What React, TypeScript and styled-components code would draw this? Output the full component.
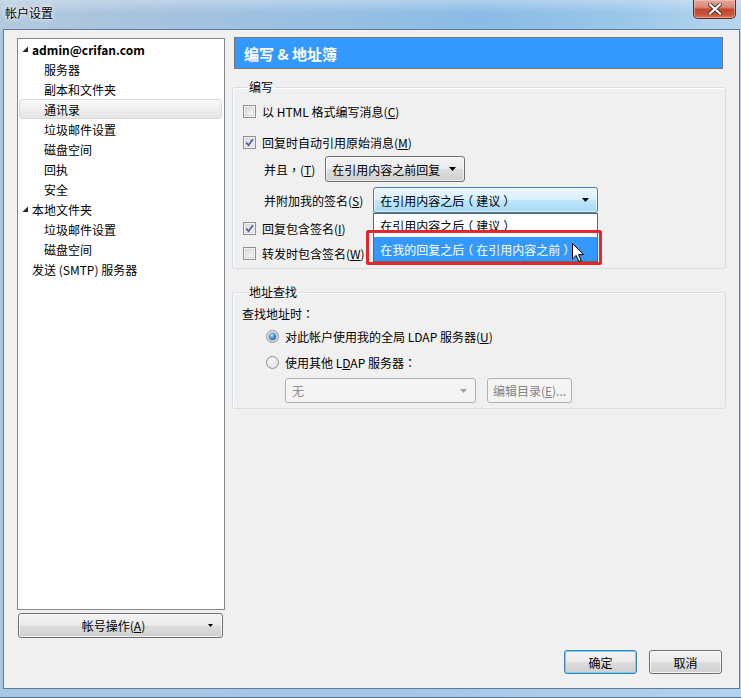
import React from "react";
import styled, { createGlobalStyle } from "styled-components";

const GlobalStyle = createGlobalStyle`
  html, body { margin: 0; padding: 0; }
  body {
    width: 741px; height: 698px; overflow: hidden;
    font-family: "Noto Sans CJK SC", "Noto Sans", sans-serif;
    font-size: 12px; color: #000;
  }
  * { box-sizing: border-box; }
`;

const Window = styled.div`
  width: 741px;
  height: 698px;
  display: flex;
  flex-direction: column;
  background: linear-gradient(90deg, #aac8e4 0%, #a3c6e6 50%, #b2d3ee 100%);
  border-bottom: 1px solid #5a7390;
`;

const TitleBar = styled.div`
  height: 29px;
  flex: none;
  display: flex;
  align-items: flex-start;
  justify-content: space-between;
  padding-left: 5px;
  background:
    linear-gradient(to bottom, rgba(255,255,255,0.3), rgba(255,255,255,0) 45%),
    linear-gradient(90deg, #b4c9de 0%, #a5c2de 22%, #98c0e3 45%, #8abbe5 65%, #9bc7e9 85%, #b8d6ed 100%);
`;

const Title = styled.div`
  line-height: 26px;
  font-size: 12px;
  color: #000;
  text-shadow: 0 0 6px #fff, 0 0 3px #fff;
`;

const CloseButton = styled.div`
  width: 43px;
  height: 19px;
  margin-right: 5px;
  display: flex;
  align-items: center;
  justify-content: center;
  border: 1px solid #5e2a22;
  border-top: none;
  border-radius: 0 0 5px 5px;
  background: linear-gradient(to bottom, #e6a595 0%, #d98a78 40%, #c4462f 52%, #c9533a 80%, #d97556 100%);
  box-shadow: inset 0 0 0 1px rgba(255, 220, 210, 0.45);
`;

const Body = styled.div`
  flex: 1;
  margin: 0 1px 8px 3px;
  border: 1px solid #5f7b9b;
  background: #f0f0f0;
  padding: 7px 13px 14px 13px;
  display: flex;
  flex-direction: column;
  min-height: 0;
`;

const MainRow = styled.div`
  flex: 1;
  display: flex;
  gap: 7px;
  min-height: 0;
`;

const LeftColumn = styled.div`
  width: 208px;
  display: flex;
  flex-direction: column;
`;

const Tree = styled.div`
  flex: 1;
  margin-top: 1px;
  border: 1px solid #828790;
  background: #fff;
`;

const TreeRow = styled.div<{ $selected?: boolean }>`
  height: 20px;
  margin: 0 2px 0 1px;
  display: flex;
  align-items: center;
  border: 1px solid ${(p) => (p.$selected ? "#d9d9d9" : "transparent")};
  border-radius: 3px;
  background: ${(p) =>
    p.$selected ? "linear-gradient(to bottom, #f8f8f8, #e5e5e5)" : "transparent"};
`;

const ExpanderSlot = styled.span`
  width: 12px;
  flex: none;
  display: flex;
  align-items: center;
  padding: 1px 0 0 2px;
`;

const TreeLabel = styled.span<{ $level: number; $bold?: boolean }>`
  margin-left: ${(p) => p.$level * 12}px;
  font-weight: ${(p) => (p.$bold ? 700 : 400)};
  font-size: 12px;
  white-space: nowrap;
`;

const PushButton = styled.div<{ $width?: number; $focus?: boolean }>`
  width: ${(p) => (p.$width ? `${p.$width}px` : "auto")};
  height: 24px;
  display: flex;
  align-items: center;
  justify-content: center;
  border: 1px solid ${(p) => (p.$focus ? "#3c7fb1" : "#707070")};
  border-radius: 3px;
  background: linear-gradient(to bottom, #f2f2f2 0%, #ebebeb 48%, #dddddd 52%, #cfcfcf 100%);
  box-shadow: inset 0 0 0 1px ${(p) => (p.$focus ? "#6fd2f6" : "rgba(255,255,255,0.7)")};
  font-size: 12px;
`;

const AccountButton = styled(PushButton)`
  height: 25px;
  margin: 3px 2px 0 1px;
  justify-content: flex-start;
`;

const AccountLabel = styled.span`
  flex: 1;
  text-align: center;
`;

const AccountArrow = styled.span`
  width: 14px;
  display: flex;
  align-items: center;
`;

const RightColumn = styled.div`
  flex: 1;
  display: flex;
  flex-direction: column;
  min-width: 0;
`;

const Header = styled.div`
  height: 32px;
  margin: 0 3px 0 2px;
  border: 1px solid #777;
  background: #3399ff;
  color: #fff;
  font-weight: 700;
  font-size: 15px;
  display: flex;
  align-items: center;
  padding-left: 9px;
  white-space: pre;
`;

const Group = styled.fieldset<{ $mt: number; $pt: number }>`
  margin: ${(p) => p.$mt}px 0 0 0;
  padding: ${(p) => p.$pt}px 9px 5px 9px;
  border: 1px solid #d5dfe5;
  border-radius: 3px;
  box-shadow: inset 1px 1px 0 #fff;
  min-width: 0;
  display: flex;
  flex-direction: column;
  align-items: flex-start;
`;

const Legend = styled.legend`
  padding: 0 2px;
  margin-left: 5px;
  line-height: 14px;
  font-size: 12px;
`;

const Key = styled.span`
  text-decoration: underline;
  text-underline-offset: 1px;
`;

/* full-width punctuation drawn centred in its cell, as the Windows UI font does */
const Punct = styled.span`
  font-family: "Noto Sans CJK TC", "Noto Sans CJK SC", sans-serif;
`;

/* full-width bracket: half-width glyph padded back to a full, centred cell */
const Bracket = styled.span`
  font-feature-settings: "halt" 1;
  padding: 0 3px;
`;

const CheckRow = styled.div<{ $mt?: number }>`
  display: flex;
  align-items: center;
  gap: 6px;
  height: 20px;
  margin: ${(p) => p.$mt ?? 0}px 0 0 1px;
  white-space: nowrap;
`;

const CheckBoxBox = styled.span`
  width: 13px;
  height: 13px;
  flex: none;
  border: 1px solid #8f8f8f;
  background: linear-gradient(135deg, #cdd0d4 0%, #eceef0 60%, #f7f7f7 100%);
  box-shadow: inset 0 0 0 1px #f4f4f4, inset 0 0 0 2px #dadada;
  display: flex;
  align-items: center;
  justify-content: center;
`;

const SelectRow = styled.div<{ $mt: number }>`
  display: flex;
  align-items: center;
  gap: 10px;
  margin: ${(p) => p.$mt}px 0 0 22px;
  white-space: nowrap;
`;

const SelectWrap = styled.div`
  position: relative;
`;

const Select = styled.div<{ $width: number; $height?: number; $open?: boolean; $disabled?: boolean }>`
  width: ${(p) => p.$width}px;
  height: ${(p) => p.$height ?? 26}px;
  display: flex;
  align-items: center;
  justify-content: space-between;
  padding: 0 8px 0 6px;
  border: 1px solid ${(p) => (p.$open ? "#3c7fb1" : p.$disabled ? "#adb2b5" : "#707070")};
  border-radius: 3px;
  color: ${(p) => (p.$disabled ? "#8d8d8d" : "#000")};
  background: ${(p) =>
    p.$disabled
      ? "#f4f4f4"
      : p.$open
      ? "linear-gradient(to bottom, #eaf6fd 0%, #d9f0fc 48%, #bee6fd 52%, #a7d9f5 100%)"
      : "linear-gradient(to bottom, #f2f2f2 0%, #ebebeb 48%, #dddddd 52%, #cfcfcf 100%)"};
  box-shadow: ${(p) => (p.$disabled ? "none" : "inset 0 0 0 1px rgba(255,255,255,0.6)")};
`;

const Popup = styled.div`
  position: absolute;
  left: 0;
  top: 26px;
  width: 100%;
  border: 1px solid #646464;
  background: #fff;
  z-index: 2;
`;

const PopupItem = styled.div<{ $active?: boolean; $h: number }>`
  height: ${(p) => p.$h}px;
  display: flex;
  align-items: center;
  padding-left: 6px;
  background: ${(p) => (p.$active ? "#3399ff" : "#fff")};
  color: ${(p) => (p.$active ? "#fff" : "#000")};
  white-space: nowrap;
`;

const Highlight = styled.div`
  position: absolute;
  left: -7px;
  top: 43px;
  width: 236px;
  height: 35px;
  border: 3px solid #e4262d;
  border-radius: 2px;
  z-index: 3;
`;

const Cursor = styled.svg`
  position: absolute;
  left: 199px;
  top: 56px;
  z-index: 4;
`;

const TextRow = styled.div<{ $mt?: number }>`
  height: 20px;
  display: flex;
  align-items: center;
  margin-top: ${(p) => p.$mt ?? 0}px;
`;

const RadioRow = styled.div<{ $mt: number }>`
  height: 20px;
  display: flex;
  align-items: center;
  gap: 6px;
  margin: ${(p) => p.$mt}px 0 0 24px;
  white-space: nowrap;
`;

const RadioCircle = styled.span`
  width: 13px;
  height: 13px;
  flex: none;
  border-radius: 50%;
  border: 1px solid #8f8f8f;
  background: radial-gradient(circle at 40% 35%, #f8f8f8 0%, #e4e4e4 70%, #d4d4d4 100%);
  display: flex;
  align-items: center;
  justify-content: center;
`;

const RadioDot = styled.span`
  width: 7px;
  height: 7px;
  border-radius: 50%;
  background: radial-gradient(circle at 40% 35%, #c7ecfb 0%, #3d8fcb 45%, #1c4f86 100%);
  box-shadow: 0 0 0 1px rgba(40, 90, 140, 0.35);
`;

const LookupRow = styled.div`
  display: flex;
  align-items: center;
  gap: 11px;
  margin: 6px 0 0 43px;
`;

const DisabledButton = styled.div`
  width: 85px;
  height: 25px;
  display: flex;
  align-items: center;
  justify-content: center;
  border: 1px solid #adb2b5;
  border-radius: 3px;
  background: #f4f4f4;
  color: #838383;
  white-space: nowrap;
`;

const ButtonRow = styled.div`
  display: flex;
  justify-content: flex-end;
  gap: 12px;
  margin-top: 12px;
  padding-right: 4px;
`;

const DownArrow = ({ color = "#000" }: { color?: string }) => (
  <svg width="7" height="4" viewBox="0 0 7 4">
    <polygon points="0,0 7,0 3.5,4" fill={color} />
  </svg>
);

const Expander = () => (
  <svg width="7" height="7" viewBox="0 0 7 7">
    <polygon points="6,0.5 6,6 0.5,6" fill="#262626" />
  </svg>
);

const CheckBox = ({ checked }: { checked?: boolean }) => (
  <CheckBoxBox>
    {checked && (
      <svg width="9" height="9" viewBox="0 0 9 9">
        <path d="M1.2 4.6 L3.6 7.2 L7.9 1.2" fill="none" stroke="#4b5f9a" strokeWidth="1.7" />
      </svg>
    )}
  </CheckBoxBox>
);

const Radio = ({ checked }: { checked?: boolean }) => (
  <RadioCircle>{checked && <RadioDot />}</RadioCircle>
);

/* text wrapped in full-width parentheses */
const Paren = ({ children }: { children: React.ReactNode }) => (
  <>
    <Bracket>（</Bracket>
    {children}
    <Bracket>）</Bracket>
  </>
);

type TreeItem = { label: string; level: number; expander?: boolean; bold?: boolean; selected?: boolean };

const treeItems: TreeItem[] = [
  { label: "admin@crifan.com", level: 0, expander: true, bold: true },
  { label: "服务器", level: 1 },
  { label: "副本和文件夹", level: 1 },
  { label: "通讯录", level: 1, selected: true },
  { label: "垃圾邮件设置", level: 1 },
  { label: "磁盘空间", level: 1 },
  { label: "回执", level: 1 },
  { label: "安全", level: 1 },
  { label: "本地文件夹", level: 0, expander: true },
  { label: "垃圾邮件设置", level: 1 },
  { label: "磁盘空间", level: 1 },
  { label: "发送 (SMTP) 服务器", level: 0 },
];

export default function App() {
  return (
    <>
      <GlobalStyle />
      <Window>
        <TitleBar>
          <Title>帐户设置</Title>
          <CloseButton>
            <svg width="14" height="12" viewBox="0 0 14 12">
              <path d="M2 1.5 L12 10.5 M12 1.5 L2 10.5" stroke="#4a2a26" strokeWidth="4" strokeLinecap="square" />
              <path d="M2 1.5 L12 10.5 M12 1.5 L2 10.5" stroke="#ffffff" strokeWidth="2.2" strokeLinecap="square" />
            </svg>
          </CloseButton>
        </TitleBar>
        <Body>
          <MainRow>
            <LeftColumn>
              <Tree>
                {treeItems.map((it, i) => (
                  <TreeRow key={i} $selected={it.selected}>
                    <ExpanderSlot>{it.expander && <Expander />}</ExpanderSlot>
                    <TreeLabel $level={it.level} $bold={it.bold}>
                      {it.label}
                    </TreeLabel>
                  </TreeRow>
                ))}
              </Tree>
              <AccountButton>
                <AccountLabel>
                  帐号操作(<Key>A</Key>)
                </AccountLabel>
                <AccountArrow>
                  <svg width="5" height="3" viewBox="0 0 5 3">
                    <polygon points="0,0 5,0 2.5,3" fill="#000" />
                  </svg>
                </AccountArrow>
              </AccountButton>
            </LeftColumn>
            <RightColumn>
              <Header>编写 &amp; 地址簿</Header>
              <Group $mt={11} $pt={7}>
                <Legend>编写</Legend>
                <CheckRow>
                  <CheckBox />
                  <span>
                    以 HTML 格式编写消息(<Key>C</Key>)
                  </span>
                </CheckRow>
                <CheckRow $mt={11}>
                  <CheckBox checked />
                  <span>
                    回复时自动引用原始消息(<Key>M</Key>)
                  </span>
                </CheckRow>
                <SelectRow $mt={4}>
                  <span>
                    并且<Punct>，</Punct>(<Key>T</Key>)
                  </span>
                  <Select $width={140}>
                    <span>在引用内容之前回复</span>
                    <DownArrow />
                  </Select>
                </SelectRow>
                <SelectRow $mt={5}>
                  <span>
                    并附加我的签名(<Key>S</Key>)
                  </span>
                  <SelectWrap>
                    <Select $width={225} $open>
                      <span>
                        在引用内容之后<Paren>建议</Paren>
                      </span>
                      <DownArrow />
                    </Select>
                    <Popup>
                      <PopupItem $h={23}>
                        在引用内容之后<Paren>建议</Paren>
                      </PopupItem>
                      <PopupItem $h={24} $active>
                        在我的回复之后<Paren>在引用内容之前</Paren>
                      </PopupItem>
                    </Popup>
                    <Highlight />
                    <Cursor width="13" height="20" viewBox="0 0 13 20">
                      <path
                        d="M0.5 0.5 L0.5 16 L4.2 12.4 L6.9 18.6 L9.2 17.6 L6.6 11.6 L11.6 11.6 Z"
                        fill="#fff"
                        stroke="#000"
                        strokeWidth="1"
                      />
                    </Cursor>
                  </SelectWrap>
                </SelectRow>
                <CheckRow $mt={5}>
                  <CheckBox checked />
                  <span>
                    回复包含签名(<Key>I</Key>)
                  </span>
                </CheckRow>
                <CheckRow $mt={5}>
                  <CheckBox />
                  <span>
                    转发时包含签名(<Key>W</Key>)
                  </span>
                </CheckRow>
              </Group>
              <Group $mt={16} $pt={4}>
                <Legend>地址查找</Legend>
                <TextRow>
                  查找地址时<Punct>：</Punct>
                </TextRow>
                <RadioRow $mt={3}>
                  <Radio checked />
                  <span>
                    对此帐户使用我的全局 LDAP 服务器(<Key>U</Key>)
                  </span>
                </RadioRow>
                <RadioRow $mt={6}>
                  <Radio />
                  <span>
                    使用其他 L<Key>D</Key>AP 服务器<Punct>：</Punct>
                  </span>
                </RadioRow>
                <LookupRow>
                  <Select $width={191} $height={25} $disabled>
                    <span>无</span>
                    <DownArrow color="#a0a0a0" />
                  </Select>
                  <DisabledButton>
                    编辑目录(<Key>E</Key>)...
                  </DisabledButton>
                </LookupRow>
              </Group>
            </RightColumn>
          </MainRow>
          <ButtonRow>
            <PushButton $width={73} $focus>
              确定
            </PushButton>
            <PushButton $width={73}>取消</PushButton>
          </ButtonRow>
        </Body>
      </Window>
    </>
  );
}
